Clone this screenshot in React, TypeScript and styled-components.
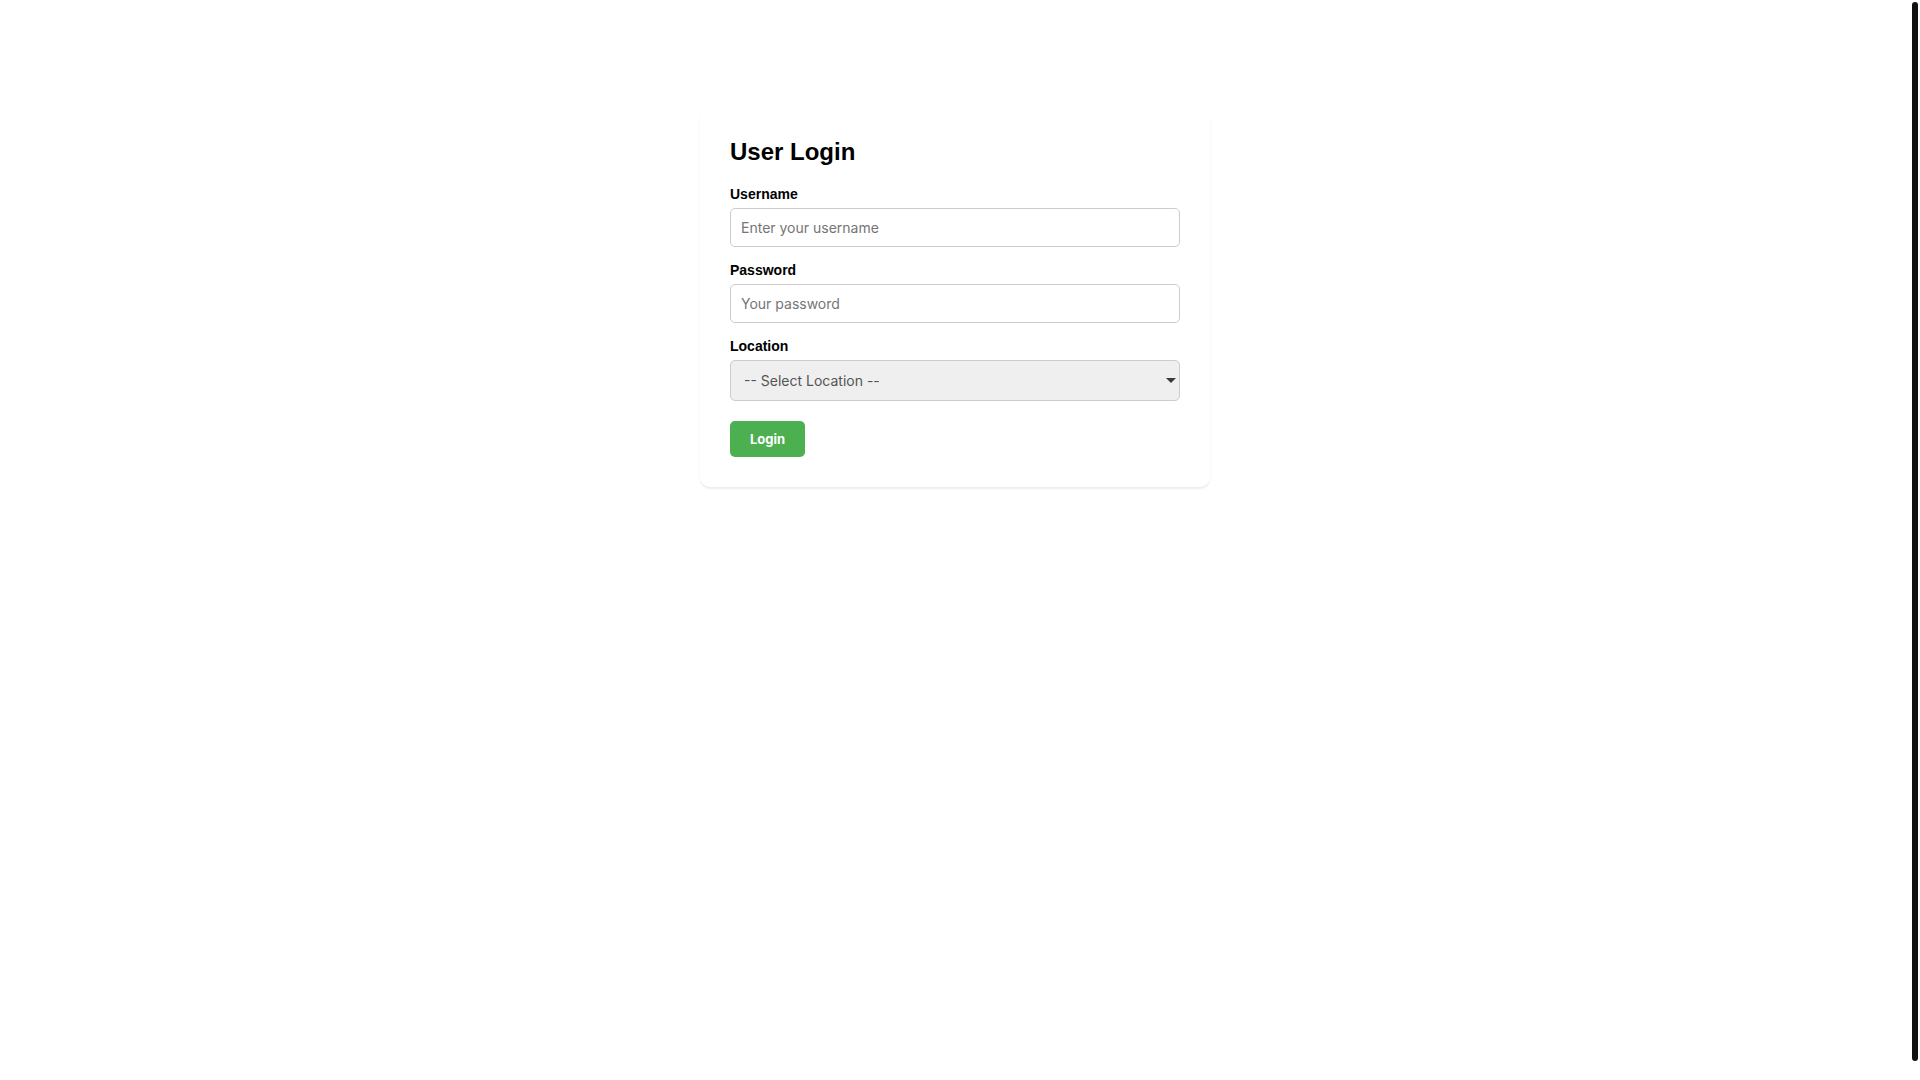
import { createGlobalStyle, styled } from 'styled-components'

const GlobalStyle = createGlobalStyle`
  html {
    background: #fff;
  }
  body {
    margin: 8px 18px 8px 8px;
    font-family: "Liberation Sans", Arial, sans-serif;
    background: #fff;
    color: #000;
  }
`

// the page's scroll thumb, drawn over the right edge
const ScrollThumb = styled.div`
  position: fixed;
  top: 2px;
  right: 2px;
  width: 6px;
  height: 1059px;
  border-radius: 3px;
  background: #111;
`

const Card = styled.div`
  max-width: 450px;
  margin: 100px auto;
  padding: 30px;
  background: #fff;
  border-radius: 10px;
  box-shadow: 0 2px 2px rgba(0, 0, 0, 0.08);
`

const Title = styled.h2`
  margin: 0 0 20px;
  font-size: 24px;
  font-weight: bold;
`

const Field = styled.div`
  margin-bottom: 15px;
`

const Label = styled.label`
  display: block;
  margin-bottom: 6px;
  font-size: 14px;
  font-weight: bold;
`

const Input = styled.input`
  display: block;
  width: 100%;
  box-sizing: border-box;
  padding: 10px;
  border: 1px solid #ccc;
  border-radius: 5px;
  font-family: Inter, "Noto Sans", sans-serif;
  font-size: 14px;
  color: #000;

  &::placeholder {
    color: #757575;
  }
`

const SelectWrap = styled.div`
  position: relative;
`

const Select = styled.select`
  display: block;
  width: 100%;
  box-sizing: border-box;
  height: 41px;
  padding: 0 24px 0 13px;
  border: 1px solid #ccc;
  border-radius: 5px;
  background-color: #efefef;
  font-family: Inter, "Noto Sans", sans-serif;
  font-size: 14px;
  color: #555;
  appearance: none;
  -webkit-appearance: none;
`

const Caret = styled.span`
  position: absolute;
  top: 18px;
  right: 4px;
  width: 0;
  height: 0;
  border-left: 5px solid transparent;
  border-right: 5px solid transparent;
  border-top: 5px solid #3a3a3a;
  pointer-events: none;
`

const Button = styled.button`
  margin-top: 5px;
  padding: 10px 20px;
  border: none;
  border-radius: 5px;
  background: #4caf50;
  color: #fff;
  font-family: Inter, "Noto Sans", sans-serif;
  font-size: 13px;
  font-weight: bold;
  cursor: pointer;
`

export default function App() {
  return (
    <>
      <GlobalStyle />
      <Card>
        <Title>User Login</Title>
        <form onSubmit={e => e.preventDefault()}>
          <Field>
            <Label htmlFor="username">Username</Label>
            <Input id="username" type="text" placeholder="Enter your username" />
          </Field>
          <Field>
            <Label htmlFor="password">Password</Label>
            <Input id="password" type="password" placeholder="Your password" />
          </Field>
          <Field>
            <Label htmlFor="location">Location</Label>
            <SelectWrap>
              <Select id="location" defaultValue="">
                <option value="">-- Select Location --</option>
                <option value="main">Main Office</option>
                <option value="branch">Branch Office</option>
              </Select>
              <Caret />
            </SelectWrap>
          </Field>
          <Button type="submit">Login</Button>
        </form>
      </Card>
      <ScrollThumb />
    </>
  )
}
